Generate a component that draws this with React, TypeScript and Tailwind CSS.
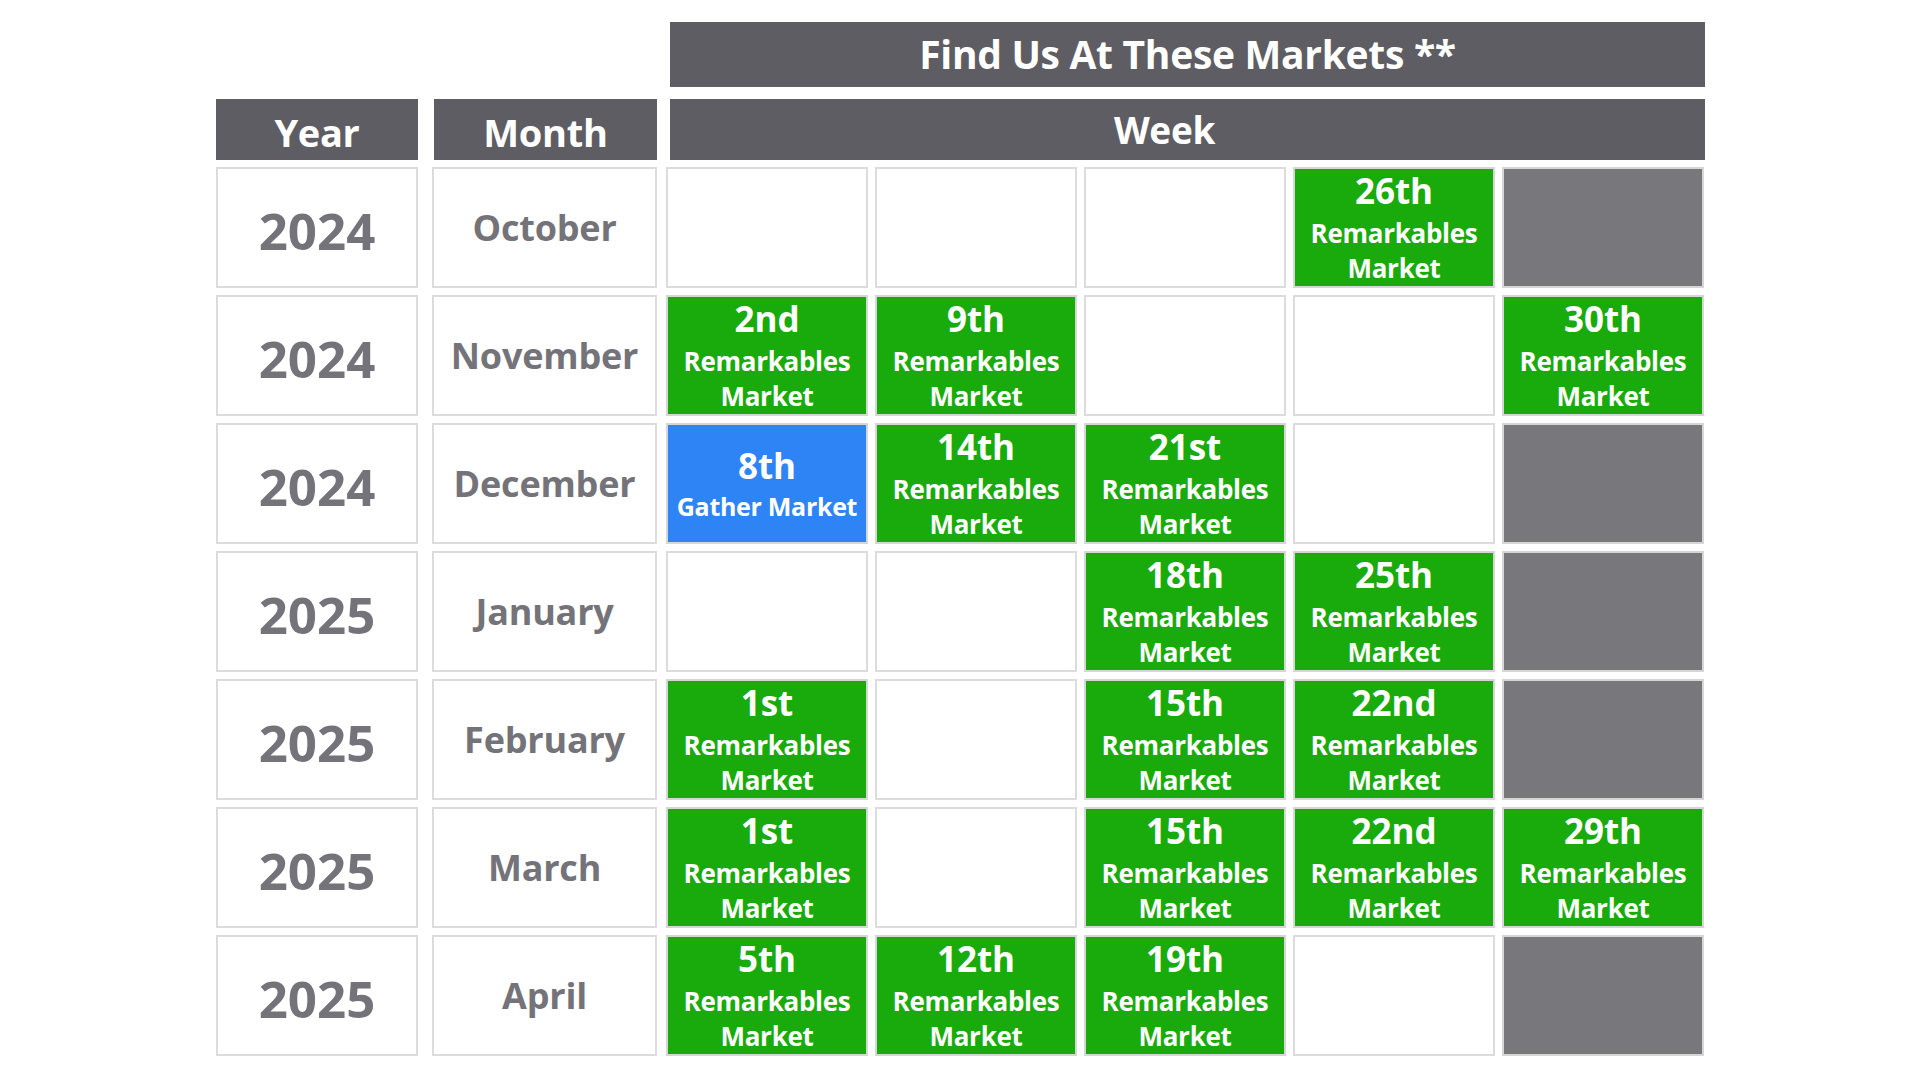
import React from 'react';

type Cell =
  | null
  | 'gray'
  | { day: string; kind: 'green' | 'blue'; label?: string };

const rows: { year: string; month: string; weeks: Cell[] }[] = [
  {
    year: '2024',
    month: 'October',
    weeks: [null, null, null, { day: '26th', kind: 'green' }, 'gray'],
  },
  {
    year: '2024',
    month: 'November',
    weeks: [{ day: '2nd', kind: 'green' }, { day: '9th', kind: 'green' }, null, null, { day: '30th', kind: 'green' }],
  },
  {
    year: '2024',
    month: 'December',
    weeks: [
      { day: '8th', kind: 'blue', label: 'Gather Market' },
      { day: '14th', kind: 'green' },
      { day: '21st', kind: 'green' },
      null,
      'gray',
    ],
  },
  {
    year: '2025',
    month: 'January',
    weeks: [null, null, { day: '18th', kind: 'green' }, { day: '25th', kind: 'green' }, 'gray'],
  },
  {
    year: '2025',
    month: 'February',
    weeks: [{ day: '1st', kind: 'green' }, null, { day: '15th', kind: 'green' }, { day: '22nd', kind: 'green' }, 'gray'],
  },
  {
    year: '2025',
    month: 'March',
    weeks: [
      { day: '1st', kind: 'green' },
      null,
      { day: '15th', kind: 'green' },
      { day: '22nd', kind: 'green' },
      { day: '29th', kind: 'green' },
    ],
  },
  {
    year: '2025',
    month: 'April',
    weeks: [{ day: '5th', kind: 'green' }, { day: '12th', kind: 'green' }, { day: '19th', kind: 'green' }, null, 'gray'],
  },
];

function WeekCell({ cell }: { cell: Cell }) {
  if (cell === null) {
    return <div className="w-[202px] h-full border-2 border-[#dcdcdc] bg-white" />;
  }
  if (cell === 'gray') {
    return <div className="w-[202px] h-full border-2 border-[#d6d6d6] bg-[#78777c]" />;
  }
  if (cell.kind === 'blue') {
    return (
      <div className="w-[202px] h-full border-2 border-[#d6d6d6] bg-[#2f84f5] flex flex-col items-center justify-center text-white font-bold">
        <div className="text-[35px] leading-[44px]">{cell.day}</div>
        <div className="text-[25px] leading-[36px] tracking-[-0.3px]">{cell.label}</div>
      </div>
    );
  }
  return (
    <div className="w-[202px] h-full border-2 border-[#d6d6d6] bg-[#19aa0b] flex flex-col items-center justify-center text-white font-bold">
      <div className="text-[35px] leading-[40px] mb-[4px]">{cell.day}</div>
      <div className="text-[26px] leading-[36px] tracking-[-0.3px]">Remarkables</div>
      <div className="text-[26px] leading-[34px] tracking-[-0.3px]">Market</div>
    </div>
  );
}

export default function App() {
  return (
    <div
      className="w-[1920px] h-[1080px] bg-white pt-[22px] pl-[216px]"
      style={{ fontFamily: '"Open Sans", "Noto Sans", sans-serif' }}
    >
      {/* title bar over the week columns */}
      <div className="flex">
        <div className="w-[454px]" />
        <div className="w-[1035px] h-[65px] bg-[#5e5d63] flex items-center justify-center text-white font-bold text-[39px] tracking-[-0.3px]">
          Find Us At These Markets **
        </div>
      </div>

      {/* column headers */}
      <div className="flex mt-[12px] h-[61px]">
        <div className="w-[202px] bg-[#5e5d63] flex items-center justify-center pt-[6px] text-white font-bold text-[38px] tracking-[-0.3px]">
          Year
        </div>
        <div className="w-[223px] ml-[16px] bg-[#5e5d63] flex items-center justify-center pt-[6px] text-white font-bold text-[38px] tracking-[-0.3px]">
          Month
        </div>
        <div className="w-[1035px] ml-[13px] bg-[#5e5d63] flex items-center justify-center pr-[46px] text-white font-bold text-[37px] tracking-[-0.3px]">
          Week
        </div>
      </div>

      {/* rows */}
      <div className="flex flex-col gap-[7px] mt-[7px]">
        {rows.map((r, i) => (
          <div key={i} className="flex gap-[7px] h-[121px]">
            <div className="w-[202px] mr-[7px] h-full border-2 border-[#dcdcdc] flex items-center justify-center pt-[6px] text-[#747379] font-bold text-[51px]">
              {r.year}
            </div>
            <div className="w-[225px] mr-[2px] h-full border-2 border-[#dcdcdc] flex items-center justify-center text-[#747379] font-bold text-[36px] tracking-[-0.2px]">
              {r.month}
            </div>
            {r.weeks.map((c, j) => (
              <WeekCell key={j} cell={c} />
            ))}
          </div>
        ))}
      </div>
    </div>
  );
}
